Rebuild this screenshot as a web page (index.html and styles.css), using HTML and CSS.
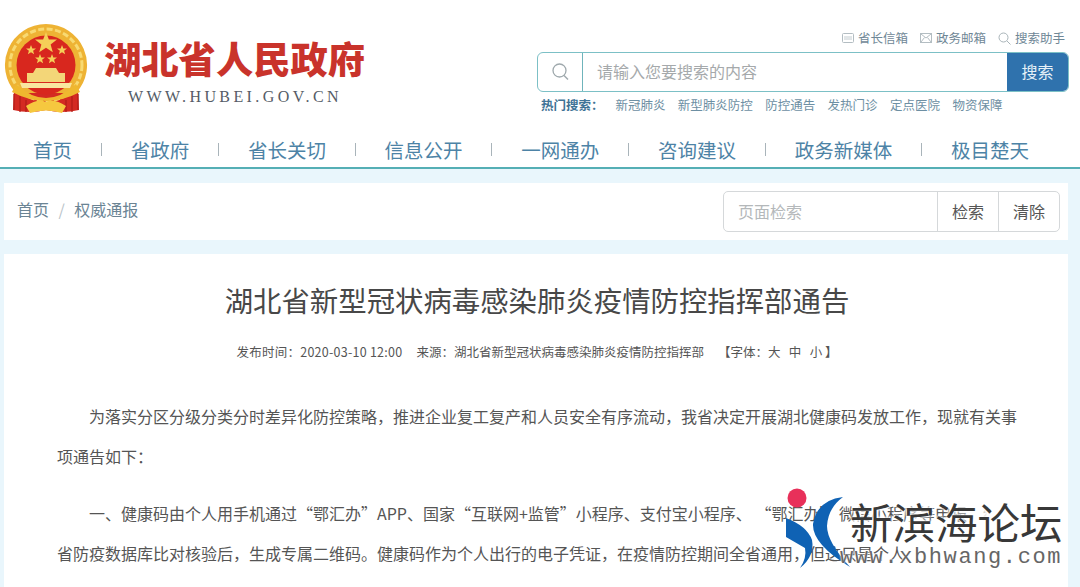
FILE: index.html
```html
<!DOCTYPE html>
<html lang="zh-CN">
<head>
    <meta charset="utf-8">
    <title>湖北省新型冠状病毒感染肺炎疫情防控指挥部通告</title>
    <link rel="stylesheet" href="styles.css">
</head>
<body>
<div class="page">
    <div class="header">
        <div class="logo">
            <svg class="emblem" width="92" height="94" viewBox="0 0 92 94">
                <defs>
                    <polygon id="star" points="0,-10 2.600,-3.200 10,-3.100 4.200,1.300 6.200,8.500 0,4.300 -6.200,8.500 -4.200,1.300 -10,-3.100 -2.600,-3.200" fill="#f5cf58"/>
                </defs>
                <path d="M14 68 L13 88 Q30 92 46 88 Q62 92 79 88 L78 68 Z" fill="#d42a22"/>
                <path d="M14 72 V88 M20 74 V90 M26 78 V90 M66 78 V90 M72 74 V90 M78 72 V88" stroke="#b01d18" stroke-width="1.200"/>
                <path d="M46 2 A41 41 0 0 1 76 71 L16 71 A41 41 0 0 1 46 2 Z" fill="#eeb334"/>
                <circle cx="46" cy="43" r="36" fill="none" stroke="#f8da72" stroke-width="3" stroke-dasharray="6 2.500"/>
                <circle cx="46" cy="43" r="29.500" fill="#d8271e"/>
                <use href="#star" transform="translate(46 21) scale(1.100)"/>
                <use href="#star" transform="translate(31 28) scale(.5)"/>
                <use href="#star" transform="translate(62 28) scale(.5)"/>
                <use href="#star" transform="translate(40 37) scale(.5)"/>
                <use href="#star" transform="translate(52 37) scale(.5)"/>
                <path d="M36 46 H56 L59 51 H65 V60 H27 V51 H33 Z" fill="#f3d678"/>
                <path d="M20 61 H72 L70 66 H22 Z" fill="#f9e6a0"/>
                <path d="M16 62 Q46 90 76 62 L80 70 Q46 88 12 70 Z" fill="#efb82f"/>
                <path d="M26 84 Q38 76 46 80 Q54 76 66 84 L62 91 Q46 86 30 91 Z" fill="#f6c83f"/>
            </svg>
            <div class="logo-words">
                <div class="logo-title">湖北省人民政府</div>
                <div class="logo-url">WWW.HUBEI.GOV.CN</div>
            </div>
        </div>
        <div class="tools">
            <div class="tool-links">
                <span class="tool-link">
                    <svg width="12" height="10" viewBox="0 0 12 10"><rect x=".5" y=".5" width="11" height="9" rx="1" fill="none" stroke="#b3bdc2"/><path d="M2 4h8M2 6h8" stroke="#c3ccd0"/></svg>
                    省长信箱
                </span>
                <span class="tool-link">
                    <svg width="12" height="10" viewBox="0 0 12 10"><rect x=".5" y=".5" width="11" height="9" fill="none" stroke="#b3bdc2"/><path d="M1 1l5 4 5-4M1 9l3.500-4.500M11 9L7.500 4.500" fill="none" stroke="#b3bdc2"/></svg>
                    政务邮箱
                </span>
                <span class="tool-link">
                    <svg width="13" height="13" viewBox="0 0 13 13"><circle cx="5.500" cy="5.500" r="4.500" fill="none" stroke="#a9b4b9"/><path d="M9 9l3.500 3.500" stroke="#a9b4b9"/></svg>
                    搜索助手
                </span>
            </div>
            <div class="search">
                <div class="search-icon">
                    <svg width="17" height="18" viewBox="0 0 17 18"><circle cx="7.500" cy="7.500" r="6.500" fill="none" stroke="#9fa9ad" stroke-width="1.300"/><path d="M12 12.500l4 4" stroke="#9fa9ad" stroke-width="1.500"/></svg>
                </div>
                <div class="search-input">请输入您要搜索的内容</div>
                <div class="search-btn">搜索</div>
            </div>
            <div class="hot">
                <b class="hot-label">热门搜索：</b>
                <span>新冠肺炎</span>
                <span>新型肺炎防控</span>
                <span>防控通告</span>
                <span>发热门诊</span>
                <span>定点医院</span>
                <span>物资保障</span>
            </div>
        </div>
    </div>

    <div class="nav">
        <span>首页</span><i></i>
        <span>省政府</span><i></i>
        <span>省长关切</span><i></i>
        <span>信息公开</span><i></i>
        <span>一网通办</span><i></i>
        <span>咨询建议</span><i></i>
        <span>政务新媒体</span><i></i>
        <span>极目楚天</span>
    </div>

    <div class="content">
        <div class="crumb-bar">
            <div class="crumbs">
                <span>首页</span>
                <span class="crumb-sep">/</span>
                <span>权威通报</span>
            </div>
            <div class="page-search">
                <div class="page-input">页面检索</div>
                <div class="page-btn">检索</div>
                <div class="page-btn">清除</div>
            </div>
        </div>

        <div class="article">
            <h1 class="article-title">湖北省新型冠状病毒感染肺炎疫情防控指挥部通告</h1>
            <div class="article-meta">
                <span class="meta-time">发布时间：2020-03-10 12:00</span>
                <span>来源：湖北省新型冠状病毒感染肺炎疫情防控指挥部</span>
                <span>【字体：大&nbsp;&nbsp;&nbsp;中&nbsp;&nbsp;&nbsp;小&nbsp;】</span>
            </div>
            <p class="para">为落实分区分级分类分时差异化防控策略，推进企业复工复产和人员安全有序流动，我省决定开展湖北健康码发放工作，现就有关事项通告如下：</p>
            <p class="para">一、健康码由个人用手机通过“鄂汇办”APP、国家“互联网+监管”小程序、支付宝小程序、&nbsp;“鄂汇办”&nbsp;微信小程序等申报，经全省防疫数据库比对核验后，生成专属二维码。健康码作为个人出行的电子凭证，在疫情防控期间全省通用，但这只是个人</p>
        </div>
    </div>

    <div class="watermark">
        <svg class="wm-logo" width="66" height="84" viewBox="0 0 66 84">
            <circle cx="12" cy="10" r="9.500" fill="#e8305a"/>
            <path d="M1 30 V49 L20 60 Q22 70 15 80 Q30 68 27 52 Q22 38 1 30 Z" fill="#0f62b4"/>
            <path d="M58 9 Q32 12 28 36 Q27 56 65 79 Q42 54 42 38 Q43 20 58 9 Z" fill="#0f62b4"/>
        </svg>
        <div class="wm-words">
            <div class="wm-name">新滨海论坛</div>
            <div class="wm-url">www.xbhwang.com</div>
        </div>
    </div>
</div>
</body>
</html>
```

FILE: styles.css
```css
html, body {
    margin: 0;
    padding: 0;
}

body {
    font-family: "Noto Sans CJK SC", "Liberation Sans", sans-serif;
    color: #555;
    background: #fff;
}

.page {
    position: relative;
    width: 1080px;
    height: 587px;
    overflow: hidden;
}

.header {
    display: flex;
    justify-content: space-between;
    height: 130px;
    padding-right: 11px;
    box-sizing: border-box;
}

.logo {
    display: flex;
    align-items: flex-start;
    padding-top: 22px;
}

.emblem {
    flex: none;
}

.logo-words {
    margin-left: 12px;
    padding-top: 14px;
}

.logo-title {
    font-size: 37.300px;
    line-height: 44px;
    font-weight: 900;
    color: #c9332b;
}

.logo-url {
    margin: 8px 0 0 24px;
    font-family: "Liberation Serif", serif;
    font-size: 16px;
    line-height: 18px;
    letter-spacing: 3.400px;
    color: #555c66;
}

.tools {
    width: 532px;
    padding-top: 30px;
}

.tool-links {
    display: flex;
    justify-content: flex-end;
    gap: 12px;
    height: 22px;
    padding-right: 4px;
    font-size: 12.500px;
    line-height: 16px;
    color: #6f8796;
}

.tool-link {
    display: flex;
    align-items: center;
    gap: 4px;
    height: 16px;
}

.search {
    display: flex;
    height: 40px;
    box-sizing: border-box;
    border: 1px solid #7cc0c6;
    border-radius: 6px;
    overflow: hidden;
}

.search-icon {
    display: flex;
    align-items: center;
    justify-content: center;
    width: 44px;
    border-right: 1px solid #6fb4bb;
}

.search-input {
    flex: 1;
    padding-left: 14px;
    font-size: 16px;
    line-height: 36px;
    color: #a5a9ab;
}

.search-btn {
    width: 61px;
    font-size: 16px;
    line-height: 36px;
    text-align: center;
    color: #e6f1f8;
    background: #2f72ad;
}

.hot {
    display: flex;
    gap: 12.400px;
    margin-top: 5px;
    padding-left: 4px;
    font-size: 12.500px;
    line-height: 16px;
    white-space: nowrap;
    color: #6d8fa3;
}

.hot-label {
    width: 62px;
    color: #3f7396;
}

.nav {
    display: flex;
    align-items: center;
    gap: 28.850px;
    height: 39px;
    padding: 1px 0 0 33px;
    box-sizing: border-box;
    border-bottom: 2px solid #55afb5;
    font-size: 19.500px;
    color: #4d83a6;
}

.nav i {
    width: 1px;
    height: 13px;
    background: #a9b4ba;
}

.content {
    display: flex;
    flex-direction: column;
    gap: 14px;
    height: 418px;
    padding: 14px 12px 0 4px;
    box-sizing: border-box;
    background: #e9f6fc;
}

.crumb-bar {
    display: flex;
    justify-content: space-between;
    align-items: center;
    flex: none;
    height: 57px;
    padding: 0 8px 0 13px;
    box-sizing: border-box;
    background: #fff;
}

.crumbs {
    display: flex;
    gap: 9.500px;
    margin-bottom: 6px;
    font-size: 16px;
    line-height: 24px;
    color: #6b8494;
}

.crumb-sep {
    color: #b9c3c9;
}

.page-search {
    display: flex;
    height: 41px;
    box-sizing: border-box;
    border: 1px solid #d5d8da;
    border-radius: 5px;
    font-size: 16px;
    line-height: 39px;
}

.page-input {
    width: 199px;
    padding-left: 14px;
    color: #b4b8ba;
}

.page-btn {
    width: 61px;
    box-sizing: border-box;
    border-left: 1px solid #d5d8da;
    text-align: center;
    color: #555;
}

.article {
    flex: 1;
    padding: 26px 51px 0 53px;
    background: #fff;
    overflow: hidden;
}

.article-title {
    margin: 0;
    font-size: 28.400px;
    line-height: 40px;
    font-weight: 400;
    text-align: center;
    color: #484848;
}

.article-meta {
    display: flex;
    justify-content: center;
    gap: 14px;
    margin-top: 22px;
    font-size: 12.500px;
    line-height: 20px;
    color: #555;
}

.meta-time {
    letter-spacing: .25px;
}

.para {
    margin: 0 0 17px;
    font-size: 16px;
    line-height: 40px;
    text-indent: 32px;
    color: #555;
}

.article-meta + .para {
    margin-top: 34px;
}

.watermark {
    position: absolute;
    left: 785px;
    top: 488px;
    display: flex;
}

.wm-logo {
    flex: none;
}

.wm-words {
    margin-left: -11px;
    padding-top: 8px;
}

.wm-name {
    padding-left: 10px;
    font-size: 42.500px;
    line-height: 50px;
    color: #383838;
    text-shadow: 0 0 3px #fff, 0 0 3px #fff, 0 0 3px #fff;
    background: linear-gradient(to right, transparent 62%, #fff 66%);
}

.wm-url {
    font-family: "Liberation Mono", monospace;
    font-size: 22px;
    line-height: 24px;
    letter-spacing: 1.600px;
    color: #666;
    text-shadow: 0 0 2px #fff, 0 0 2px #fff;
    background: linear-gradient(to right, transparent 40%, #fff 44%);
}
```
